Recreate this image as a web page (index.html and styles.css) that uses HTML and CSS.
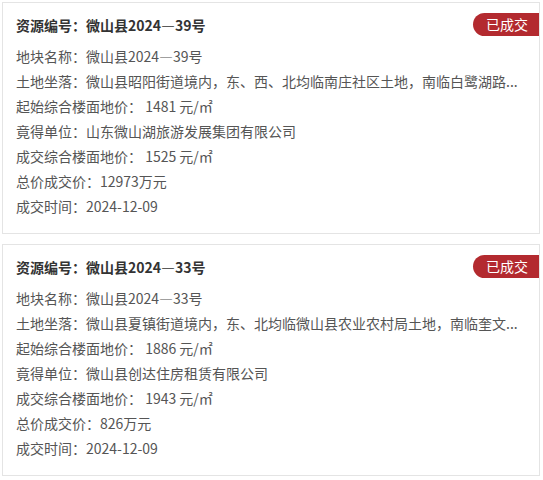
FILE: index.html
```html
<!DOCTYPE html>
<html lang="zh">
<head>
<meta charset="utf-8">
<link rel="stylesheet" href="styles.css">
</head>
<body>
<div class="list">
  <div class="card">
    <div class="card-head">
      <div class="title">资源编号：微山县2024—39号</div>
      <div class="badge">已成交</div>
    </div>
    <div class="rows">
      <div class="row">地块名称：微山县2024—39号</div>
      <div class="row">土地坐落：微山县昭阳街道境内，东、西、北均临南庄社区土地，南临白鹭湖路...</div>
      <div class="row">起始综合楼面地价： 1481 元/㎡</div>
      <div class="row">竟得单位：山东微山湖旅游发展集团有限公司</div>
      <div class="row">成交综合楼面地价： 1525 元/㎡</div>
      <div class="row">总价成交价：12973万元</div>
      <div class="row">成交时间：2024-12-09</div>
    </div>
  </div>
  <div class="card">
    <div class="card-head">
      <div class="title">资源编号：微山县2024—33号</div>
      <div class="badge">已成交</div>
    </div>
    <div class="rows">
      <div class="row">地块名称：微山县2024—33号</div>
      <div class="row">土地坐落：微山县夏镇街道境内，东、北均临微山县农业农村局土地，南临奎文...</div>
      <div class="row">起始综合楼面地价： 1886 元/㎡</div>
      <div class="row">竟得单位：微山县创达住房租赁有限公司</div>
      <div class="row">成交综合楼面地价： 1943 元/㎡</div>
      <div class="row">总价成交价：826万元</div>
      <div class="row">成交时间：2024-12-09</div>
    </div>
  </div>
</div>
</body>
</html>
```

FILE: styles.css
```css
html, body {
  margin: 0;
  background: #ffffff;
}
body {
  padding: 2px 3px 0 2px;
  font-family: "Noto Sans CJK SC", "Noto Sans", sans-serif;
  font-size: 14px;
  color: #555555;
}
.list {
  display: flex;
  flex-direction: column;
  gap: 10px;
}
.card {
  border: 1px solid #e4e4e4;
  padding: 10px 0 14px 13px;
  background: #fff;
}
.card-head {
  display: flex;
  justify-content: space-between;
  align-items: center;
  height: 23px;
}
.title {
  font-weight: bold;
  color: #333333;
  font-size: 14px;
}
.badge {
  background: #b32a2f;
  color: #ffffff;
  height: 23px;
  line-height: 23px;
  padding: 0 11px 0 13px;
  border-radius: 12px 0 0 12px;
}
.rows {
  margin-top: 8px;
  padding-right: 16px;
}
.row {
  line-height: 25px;
  height: 25px;
  white-space: nowrap;
}
```
